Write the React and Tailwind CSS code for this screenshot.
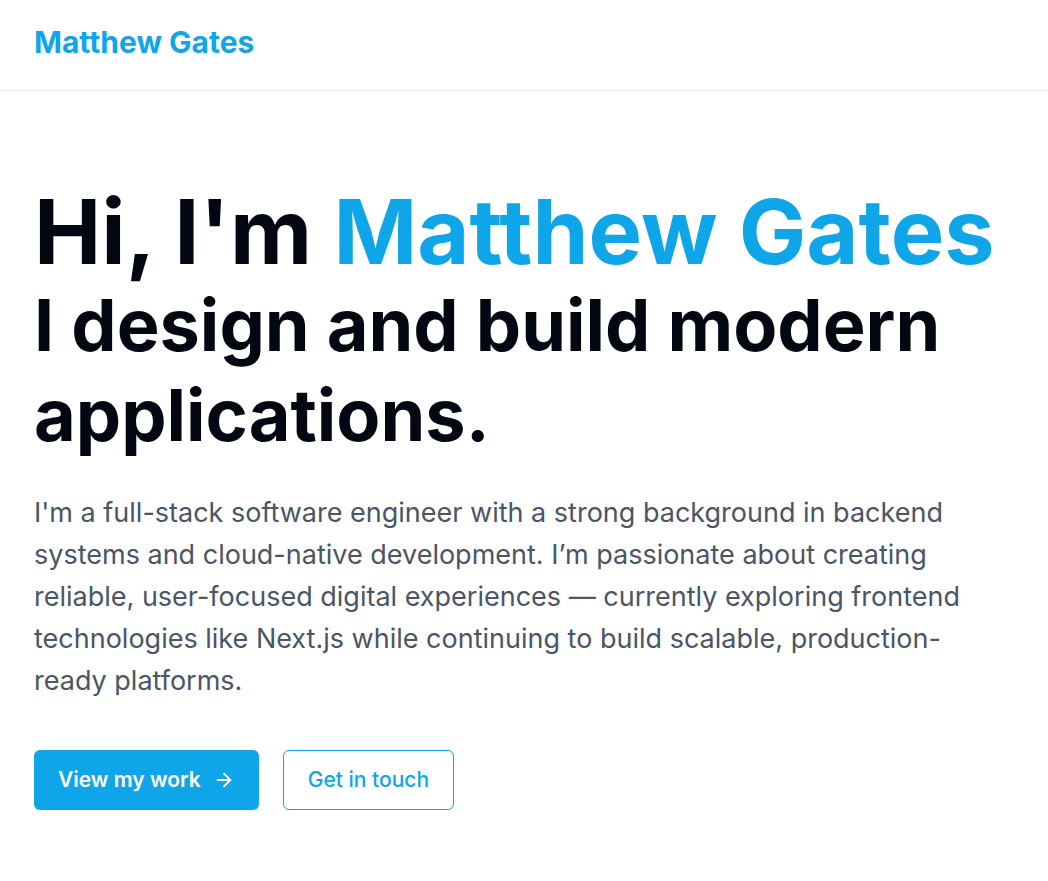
import React from "react";

export default function App() {
  return (
    <div className="min-h-screen bg-white" style={{ fontFamily: "Inter, 'Noto Sans', sans-serif" }}>
      <header className="border-b border-gray-100">
        <div className="px-[34px] h-[90px] pb-[6px] flex items-center">
          <span className="text-[30px] font-bold text-[#0ea5e9]">Matthew Gates</span>
        </div>
      </header>
      <main className="px-[34px] pt-[93px]">
        <h1 className="font-bold text-[#030712]">
          <span className="block text-[90px] leading-[96px]">
            Hi, I'm <span className="text-[#0ea5e9]">Matthew Gates</span>
          </span>
          <span className="block text-[72px] leading-[90px]">I design and build modern applications.</span>
        </h1>
        <p className="mt-[32px] max-w-[940px] text-[27px] leading-[42px] text-gray-600">
          I'm a full-stack software engineer with a strong background in backend systems and cloud-native development. I’m passionate about creating reliable, user-focused digital experiences — currently exploring frontend technologies like Next.js while continuing to build scalable, production-ready platforms.
        </p>
        <div className="mt-[48px] flex gap-6">
          <a className="h-[60px] px-6 rounded-md bg-[#0ea5e9] text-white text-[21px] font-semibold flex items-center gap-3">
            View my work
            <svg width="22" height="22" viewBox="0 0 24 24" fill="none" stroke="currentColor" strokeWidth="2" strokeLinecap="round" strokeLinejoin="round">
              <path d="M5 12h14" />
              <path d="m12 5 7 7-7 7" />
            </svg>
          </a>
          <a className="h-[60px] px-6 rounded-md border border-[#0ea5e9] text-[#0ea5e9] text-[21px] font-medium flex items-center">
            Get in touch
          </a>
        </div>
      </main>
    </div>
  );
}
